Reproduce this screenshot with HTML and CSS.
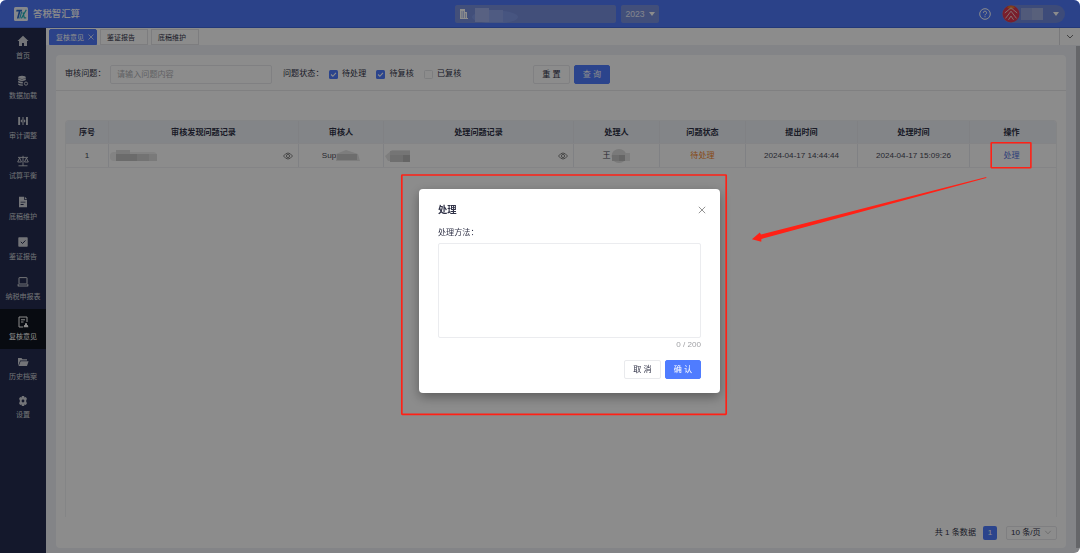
FILE: index.html
```html
<!DOCTYPE html>
<html lang="zh-CN">
<head>
<meta charset="utf-8">
<title>答税智汇算</title>
<link rel="stylesheet" href="styles.css">
</head>
<body>
<div class="app">
  <header class="topbar">
    <div class="brand">
      <svg class="logo" viewBox="0 0 14 14"><rect width="14" height="14" rx="1.5" fill="#f4f8ff"/><path d="M2.6 2.8h5.6L7.7 4.4H6.4L4.6 11.4H2.9L4.7 4.4H2.1z" fill="#2769c9"/><path d="M8.3 4.4l-1.9 7H5.2L7 4.4z" fill="#31a9cf"/><path d="M12.3 2.8L7.4 11.4M9 5.4l1.3 5.4h1.9" fill="none" stroke="#20b3bb" stroke-width="1.2"/></svg>
      <span>答税智汇算</span>
    </div>
    <div class="picker">
      <div class="company">
        <svg class="building" viewBox="0 0 8 10"><path d="M0 0h5v3h2v6h1v1H0zM1.7 2v7h.5V2zM3.5 2v7h.5V2zM5.5 4.3V9h.5V4.3z" fill="#fff" fill-rule="evenodd"/></svg>
        <svg class="company-blur" viewBox="0 0 50 17"><ellipse cx="25" cy="10" rx="23" ry="6.5" fill="#829bea"/><rect x="5" y="1" width="14" height="14" fill="#a0b1ed"/><rect x="19" y="3" width="14" height="12" fill="#91a6ed"/></svg>
      </div>
      <div class="year">2023<i class="caret"></i></div>
    </div>
    <div class="account">
      <svg class="help" viewBox="0 0 12 12" fill="none" stroke="#fff"><circle cx="6" cy="6" r="5.3"/><path d="M4.4 4.8a1.6 1.6 0 1 1 2.3 1.4c-.6.3-.7.5-.7 1.1M6 8.2v1"/></svg>
      <div class="user">
        <svg class="avatar" viewBox="0 0 18 18"><circle cx="9" cy="9" r="8.5" fill="#dc3850"/><path d="M5 2.2Q9-.7 13 2.2L9 5z" fill="#e8792c"/><path d="M2.8 8L9 2.8 15.2 8M3.5 13.4L9 6.2l5.5 7.2M6.5 14.8L9 11l2.5 3.8" fill="none" stroke="#f4c8cc" stroke-width="1"/></svg>
        <span class="name-blur"><i></i><i></i></span>
        <i class="caret"></i>
      </div>
    </div>
  </header>

  <div class="body">
    <nav class="sidebar">
      <a class="item"><svg viewBox="0 0 12 12"><path d="M6 .7L.5 6H2v5h3V8h2v3h3V6h1.5z" fill="currentColor"/></svg><span>首页</span></a>
      <a class="item"><svg viewBox="0 0 12 12" fill="currentColor"><ellipse cx="5" cy="2.3" rx="3.8" ry="1.6"/><path d="M1.2 3.3q3.8 2.2 7.6 0v1.6q-3.8 2-7.6 0zM1.2 5.8q2.2 1.3 4.6.9v1.8q-2.6.3-4.6-.9zM1.2 8.5q2 1.1 4.6.9v1.3q-3.4.1-4.6-1z"/><circle cx="9" cy="8.6" r="1.6" fill="none" stroke="currentColor" stroke-width=".9"/></svg><span>数据加载</span></a>
      <a class="item"><svg viewBox="0 0 12 12" fill="currentColor"><path d="M1.2 2h1.9v8H1.2zM5.5 2h1v8h-1zM9 2h1.9v8H9zM3.4 6l1.7-1.7v3.4zM8.7 6L7 4.3v3.4z"/></svg><span>审计调整</span></a>
      <a class="item"><svg viewBox="0 0 12 12" fill="none" stroke="currentColor" stroke-width=".9"><path d="M6 .8v10M1 2.4h10M1.5 10.8h9M.7 7l1.9-4 1.9 4zM7.5 7l1.9-4 1.9 4z"/></svg><span>试算平衡</span></a>
      <a class="item"><svg viewBox="0 0 12 12"><path fill-rule="evenodd" d="M2 .8h5v3h3v7.4H2zM3.6 5.7v.9h4.8v-.9zM3.6 8v.9h3V8zM7.8.8L10 3H7.8z" fill="currentColor"/></svg><span>底稿维护</span></a>
      <a class="item"><svg viewBox="0 0 12 12"><rect x="1.3" y="1.3" width="9.4" height="9.4" rx=".7" fill="currentColor"/><path d="M3.8 5.8l1.7 1.7 2.9-3" fill="none" stroke="#252d50"/></svg><span>鉴证报告</span></a>
      <a class="item"><svg viewBox="0 0 12 12" fill="none" stroke="currentColor"><rect x="2" y="1.6" width="8" height="6.4" rx=".3"/><path d="M.8 10h10.4M1.2 8v2M10.8 8v2"/></svg><span>纳税申报表</span></a>
      <a class="item active"><svg viewBox="0 0 12 12" fill="none" stroke="currentColor"><path d="M10 6V1H2v10h4M4 3.8h4M4 6h2.5"/><path d="M6.6 11.2l.6-2.1h.8V7.2h2v1.9h.8l.6 2.1z" fill="currentColor" stroke="none"/></svg><span>复核意见</span></a>
      <a class="item"><svg viewBox="0 0 12 12" fill="currentColor"><path d="M1 10V2h3.5l1 1.2H10v1.3H3.2zM3.6 5.2h8L10 10H1.7z"/></svg><span>历史档案</span></a>
      <a class="item short"><svg viewBox="0 0 12 12"><path fill-rule="evenodd" d="M4.9 1h2.2l.4 1.4 1.4-.3L10 4l-.8 1.1v1.8L10 8 8.9 9.9l-1.4-.3L7.1 11H4.9l-.4-1.4-1.4.3L2 8l.8-1.1V5.1L2 4l1.1-1.9 1.4.3zM6 4.6a1.4 1.4 0 1 0 0 2.8 1.4 1.4 0 0 0 0-2.8z" fill="currentColor"/></svg><span>设置</span></a>
    </nav>

    <div class="workspace">
      <div class="tabs">
        <div class="tab current">复核意见<svg class="tab-close" viewBox="0 0 6 6"><path d="M.5.5l5 5M5.5.5l-5 5" stroke="#fff" stroke-width=".7"/></svg></div>
        <div class="tab">鉴证报告</div>
        <div class="tab">底稿维护</div>
        <div class="tab-more"><svg viewBox="0 0 8 5"><path d="M1 1l3 3 3-3" fill="none" stroke="#777"/></svg></div>
      </div>
      <div class="content">
        <main class="card">
          <div class="filters">
            <label>审核问题：</label>
            <div class="input">请输入问题内容</div>
            <label class="state-label">问题状态：</label>
            <div class="check on"><svg viewBox="0 0 10 10"><path d="M2.3 5l2 2 3.4-3.8" fill="none" stroke="#fff" stroke-width="1.2"/></svg></div><span class="check-text">待处理</span>
            <div class="check on"><svg viewBox="0 0 10 10"><path d="M2.3 5l2 2 3.4-3.8" fill="none" stroke="#fff" stroke-width="1.2"/></svg></div><span class="check-text">待复核</span>
            <div class="check"></div><span class="check-text">已复核</span>
            <div class="btn reset">重 置</div>
            <div class="btn primary">查 询</div>
          </div>
          <div class="table">
            <div class="row head">
              <div>序号</div><div>审核发现问题记录</div><div>审核人</div><div>处理问题记录</div><div>处理人</div><div>问题状态</div><div>提出时间</div><div>处理时间</div><div class="last">操作</div>
            </div>
            <div class="row">
              <div>1</div>
              <div class="record"><svg class="mosaic wide" viewBox="0 0 50 14"><rect x="0" y="3" width="47" height="9" rx="4" fill="#eee"/><rect x="6" y="1" width="14" height="4" fill="#dedede"/><rect x="6" y="5" width="21" height="7" fill="#c4c4c4"/><rect x="27" y="5" width="12" height="7" fill="#d2d2d2"/><rect x="39" y="5" width="8" height="7" fill="#dfdfdf"/></svg><svg class="eye" viewBox="0 0 10 8" fill="none" stroke="#666" stroke-width=".8"><path d="M.5 4Q5-2 9.5 4 5 10 .5 4z"/><circle cx="5" cy="4" r="1.6"/></svg></div>
              <div class="person">Sup<svg class="mosaic sup" viewBox="0 0 24 14"><path d="M0 5L10 1l12 4 2 7H0z" fill="#e4e4e4"/><rect x="1" y="5" width="20" height="6" fill="#c6c6c6"/></svg></div>
              <div class="record"><svg class="mosaic mid" viewBox="0 0 28 14"><path d="M0 7L7 1h18v11H3z" fill="#e5e5e5"/><rect x="5" y="2" width="20" height="4" fill="#d6d6d6"/><rect x="5" y="6" width="13" height="7" fill="#cbcbcb"/><rect x="18" y="6" width="7" height="7" fill="#b9b9b9"/></svg><svg class="eye" viewBox="0 0 10 8" fill="none" stroke="#666" stroke-width=".8"><path d="M.5 4Q5-2 9.5 4 5 10 .5 4z"/><circle cx="5" cy="4" r="1.6"/></svg></div>
              <div class="person">王<svg class="mosaic wang" viewBox="0 0 20 14"><ellipse cx="8" cy="7" rx="7.5" ry="7" fill="#dedede"/><rect x="1" y="6" width="7" height="6" fill="#c8c8c8"/><rect x="8" y="6" width="6" height="6" fill="#bbb"/><rect x="14" y="4" width="5" height="8" fill="#e5e5e5"/></svg></div>
              <div class="pending">待处理</div>
              <div>2024-04-17 14:44:44</div>
              <div>2024-04-17 15:09:26</div>
              <div class="action last">处理</div>
            </div>
            <div class="table-rest"></div>
          </div>
          <div class="pager"><span>共 1 条数据</span><b>1</b><div class="size">10 条/页<svg viewBox="0 0 8 5"><path d="M1.2 .8l2.8 3 2.8-3" fill="none" stroke="#bbb" stroke-width=".8"/></svg></div></div>
        </main>
        <div class="scrollbar"></div>
      </div>
    </div>
  </div>
</div>

<div class="mask"></div>

<section class="dialog">
  <div class="dialog-head"><h2>处理</h2><svg viewBox="0 0 8 8"><path d="M.8.8l6.4 6.4M7.2.8L.8 7.2" stroke="#888" stroke-width=".9"/></svg></div>
  <div class="dialog-label">处理方法：</div>
  <div class="textarea"></div>
  <div class="counter">0 / 200</div>
  <div class="dialog-actions"><div class="btn">取 消</div><div class="btn primary">确 认</div></div>
</section>

<svg class="annotations" viewBox="0 0 1080 553" fill="none" stroke="#ff2116">
  <rect x="401.8" y="175" width="324.4" height="239.3" rx=".5" stroke-width="1.7"/>
  <rect x="991.2" y="142.8" width="39.7" height="25" rx=".5" stroke-width="1.6"/>
  <path d="M986.3 177L761 234.4l-1.2-1.9-7.9 6.7 9.4 2.5.1-2.8L986.3 178z" fill="#ff2116" stroke="none"/>
</svg>
</body>
</html>
```
FILE: styles.css
```css
* { box-sizing: border-box; }
html { background: #fff; }
body { margin: 0; width: 1080px; height: 553px; overflow: hidden; font: 8.1px/12px "Liberation Sans", "Noto Sans CJK SC", sans-serif; color: #303247; }
svg { display: block; flex: none; }
.app { height: 553px; display: flex; flex-direction: column; border-radius: 6px 6px 6px 0; overflow: hidden; background: #eef1f6; }
.mask { position: fixed; inset: 0; background: rgba(0, 0, 0, .45); border-radius: 6px 6px 6px 0; }

.topbar { height: 28px; flex: none; display: flex; align-items: center; background: #4f78fa; color: #fff; padding-left: 14px; border-bottom: 1px solid #4169dc; }
.brand { width: 440px; display: flex; align-items: center; gap: 5px; font-size: 9.4px; font-weight: 500; }
.logo { width: 14px; height: 14px; }
.picker { width: 524px; display: flex; gap: 5px; }
.company { width: 161px; height: 18px; border-radius: 2px; background: #7890df; display: flex; align-items: center; padding-left: 5px; gap: 2px; overflow: hidden; margin-left: 1px; }
.building { width: 8px; height: 10px; }
.company-blur { width: 50px; height: 17px; margin-top: 3px; }
.year { width: 38px; height: 18px; border-radius: 2px; background: #7890df; display: flex; align-items: center; justify-content: center; gap: 4px; font-size: 8.6px; color: #eef2ff; }
.caret { border: 3px solid transparent; border-top: 4px solid #fff; border-bottom: 0; }
.account { display: flex; align-items: center; gap: 11px; padding-left: 1px; }
.help { width: 12px; height: 12px; }
.user { width: 63px; height: 18px; border-radius: 9px; background: #7089dc; display: flex; align-items: center; padding-right: 6px; }
.user .caret { margin-left: auto; }
.avatar { width: 18px; height: 18px; }
.name-blur { display: flex; width: 22px; height: 12px; margin-left: 1px; }
.name-blur i { flex: 1; background: #94a5df; }
.name-blur i + i { background: #a0afe0; }

.body { flex: 1; min-height: 0; display: flex; }
.sidebar { width: 46px; flex: none; background: #252d50; color: #d2d4da; font-size: 7px; }
.item { height: 40.15px; display: flex; flex-direction: column; align-items: center; padding-top: 7px; gap: 3px; white-space: nowrap; }
.item svg { width: 12px; height: 12px; }
.item span { line-height: 12px; }
.item.active { background: #10151f; color: #fff; }
.item.short { padding-top: 6px; gap: 2px; }

.workspace { flex: 1; display: flex; flex-direction: column; }
.tabs { height: 17px; flex: none; background: #fff; display: flex; align-items: flex-end; gap: 3px; padding-left: 3px; }
.tab { width: 48px; height: 16px; border: 1px solid #e3e4e8; font-size: 7px; line-height: 15px; padding-left: 6px; white-space: nowrap; }
.tab.current { background: #4f78fa; border-color: #4f78fa; color: #fff; display: flex; align-items: center; justify-content: space-between; padding-right: 2px; border-radius: 2px 2px 0 0; }
.tab-close { width: 6px; height: 6px; }
.tab-more { margin-left: auto; width: 21px; height: 17px; border-left: 1px solid #dcdde0; display: grid; place-items: center; }
.tab-more svg { width: 8px; height: 5px; }

.content { flex: 1; min-height: 0; display: flex; justify-content: space-between; padding-left: 10px; }
.card { width: 1010px; margin: 10px 0 5px; border-radius: 4px; background: #fff; display: flex; flex-direction: column; }
.scrollbar { width: 4px; margin: 1px 0 5px; background: #b9bac0; }
.filters { height: 36px; flex: none; border-bottom: 1px solid #e9eaec; display: flex; align-items: center; padding: 3px 0 0 9px; white-space: nowrap; }
.filters label { width: 45px; }
.input { width: 162px; height: 19px; border: 1px solid #e9eaed; border-radius: 2px; line-height: 17px; padding-left: 6px; color: #b0b1b5; }
.filters .state-label { margin-left: 11px; width: 45.5px; }
.check { width: 9px; height: 9px; border: 1px solid #e4e5e8; border-radius: 1.5px; }
.check.on { background: #4f7cff; border: 0; }
.check-text { width: 34px; margin-left: 4.5px; }
.btn { width: 37px; height: 19px; border: 1px solid #e9eaed; border-radius: 2px; text-align: center; line-height: 17px; background: #fff; }
.btn.primary { width: 36px; margin-left: 4px; background: #4f7cff; border-color: #4f7cff; color: #fff; }
.btn.reset { margin-left: 62px; }

.table { flex: 1; display: flex; flex-direction: column; margin: 29px 9px 0; border: 1px solid #f1f2f5; border-bottom: 0; border-radius: 4px 4px 0 0; overflow: hidden; }
.row { display: grid; grid-template-columns: 43px 190px 85px 190px 86px 86px 112px 112px 1fr; height: 24px; flex: none; border-bottom: 1px solid #f0f1f4; }
.row > div { display: flex; align-items: center; justify-content: center; border-right: 1px solid #eaecf0; color: #484a58; }
.row > div.last { border-right: 0; padding-right: 3px; }
.row.head { height: 23px; background: #eef2f7; }
.row.head > div { font-weight: 700; color: #303247; padding-top: 1px; }
.row .record { justify-content: space-between; padding: 0 5px 0 1px; }
.row .pending { color: #f4852b; }
.row .action { color: #4f6fdc; }
.eye { width: 10px; height: 8px; }
.mosaic { height: 14px; }
.wide { width: 50px; }
.mid { width: 28px; }
.sup { width: 24px; }
.wang { width: 20px; }
.table-rest { flex: 1; }
.pager { height: 31px; flex: none; display: flex; align-items: center; justify-content: flex-end; padding-right: 9px; white-space: nowrap; }
.pager b { width: 14px; height: 14px; margin: 0 9px 0 7px; border-radius: 2px; background: #4f7cff; color: #fff; text-align: center; line-height: 14px; font-weight: 400; }
.size { width: 51px; height: 14px; border: 1px solid #e7e8eb; border-radius: 2px; display: flex; align-items: center; justify-content: space-between; padding: 0 4px; }
.size svg { width: 8px; height: 5px; }

.dialog { position: fixed; left: 419px; top: 189px; width: 301px; height: 204px; border-radius: 4px; background: #fff; padding: 14px 19px 0; box-shadow: 0 4px 12px rgba(0, 0, 0, .35); }
.dialog-head { height: 14px; display: flex; align-items: center; justify-content: space-between; margin-right: -5px; }
.dialog-head h2 { margin: 0; font-size: 9.3px; font-weight: 700; }
.dialog-head svg { width: 8px; height: 8px; }
.dialog-label { margin-top: 10px; height: 12px; }
.textarea { width: 263px; height: 95px; margin-top: 4px; border: 1px solid #ebecef; border-radius: 2px; }
.counter { text-align: right; color: #a0a1a5; margin-top: 1px; height: 12px; }
.dialog-actions { display: flex; justify-content: flex-end; margin-top: 9px; }
.annotations { position: fixed; left: 0; top: 0; width: 1080px; height: 553px; pointer-events: none; }
```
